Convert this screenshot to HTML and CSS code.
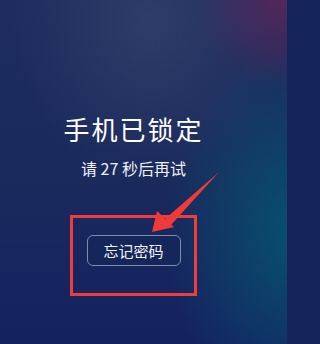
FILE: index.html
```html
<!DOCTYPE html>
<html lang="zh-CN">
<head>
<meta charset="utf-8">
<title>手机已锁定</title>
<link rel="stylesheet" href="styles.css">
</head>
<body>
<div class="screen">
  <div class="content">
    <h1 class="title">手机已锁定</h1>
    <p class="subtitle">请 27 秒后再试</p>
    <button class="forgot">忘记密码</button>
  </div>
  <div class="mark-box"></div>
  <svg class="mark-arrow" width="287" height="344" viewBox="0 0 287 344">
    <path d="M219 172 L165 219 L171 225 Z" fill="#f03a3a"/>
    <path d="M152 232 L157 211 L174 227 Z" fill="#f03a3a"/>
  </svg>
</div>
</body>
</html>
```
FILE: styles.css
```css
html, body {
  margin: 0;
  padding: 0;
  background: #16245c;
}
body {
  width: 287px;
  height: 344px;
  overflow: hidden;
  font-family: "Noto Sans CJK SC", "Noto Sans", sans-serif;
}
.screen {
  position: relative;
  width: 287px;
  height: 344px;
  overflow: hidden;
  background:
    radial-gradient(ellipse 90px 90px at 287px 0px, rgba(92,38,90,0.9), rgba(92,38,90,0) 100%),
    radial-gradient(ellipse 140px 160px at 150px 20px, rgba(52,66,108,0.75), rgba(52,66,108,0) 100%),
    radial-gradient(ellipse 130px 190px at 295px 230px, rgba(6,82,112,0.95), rgba(6,82,112,0) 100%),
    linear-gradient(180deg, #1e2c5e 0%, #1a2a5c 50%, #142260 100%);
}
.content {
  display: flex;
  flex-direction: column;
  align-items: center;
  padding-top: 112px;
  padding-right: 20px;
}
.title {
  margin: 0;
  font-size: 26px;
  line-height: 34px;
  font-weight: 400;
  letter-spacing: 2px;
  color: #ffffff;
}
.subtitle {
  margin: 11px 0 0 0;
  font-size: 16px;
  line-height: 22px;
  color: #eef0f6;
}
.forgot {
  margin-top: 56px;
  width: 94px;
  height: 31px;
  border: 1px solid #7f8cab;
  border-radius: 6px;
  background: #15265a;
  color: #f2f4f8;
  font-family: "Noto Sans CJK SC", "Noto Sans", sans-serif;
  font-size: 15px;
  padding: 0;
}
.mark-box {
  position: absolute;
  left: 70px;
  top: 215px;
  width: 121px;
  height: 75px;
  border: 3px solid #f23b3b;
}
.mark-arrow {
  position: absolute;
  left: 0;
  top: 0;
}
```
